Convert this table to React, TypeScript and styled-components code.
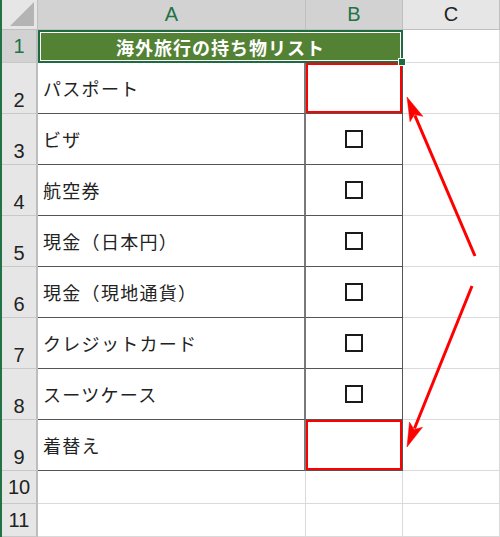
import React from "react";
import styled, { createGlobalStyle, css } from "styled-components";

const Global = createGlobalStyle`
  html, body { margin: 0; padding: 0; background: #ffffff; }
  body { width: 500px; height: 537px; overflow: hidden; }
`;

const Sheet = styled.div`
  position: relative;
  display: grid;
  grid-template-columns: 36px 268px 97px 97px;
  grid-template-rows: 30px 33px repeat(8, 51px) 33px 33px;
  border-left: 2px solid #217346;
  width: 498px;
  height: 537px;
  background: #ffffff;
  font-family: "Noto Sans CJK JP", "Noto Sans", sans-serif;
`;

const Corner = styled.div`
  position: relative;
  background: #e6e6e6;
  border-right: 1px solid #bfbfbf;
  border-bottom: 1px solid #bfbfbf;
  &::after {
    content: "";
    position: absolute;
    right: 3px;
    bottom: 3px;
    width: 24px;
    height: 24px;
    background: #b4b4b4;
    clip-path: polygon(100% 0, 100% 100%, 0 100%);
  }
`;

const ColHeader = styled.div<{ $active?: boolean }>`
  display: flex;
  align-items: center;
  justify-content: center;
  font-family: "Liberation Sans", Arial, sans-serif;
  font-size: 20px;
  background: ${(p) => (p.$active ? "#d2d2d2" : "#e6e6e6")};
  color: ${(p) => (p.$active ? "#217346" : "#222222")};
  border-right: 1px solid #bfbfbf;
  border-bottom: 1px solid #bfbfbf;
  box-sizing: border-box;
`;

const RowHeader = styled.div<{ $active?: boolean; $center?: boolean }>`
  display: flex;
  justify-content: center;
  align-items: ${(p) => (p.$center ? "center" : "flex-end")};
  padding-bottom: ${(p) => (p.$center ? "0" : "3px")};
  font-family: "Liberation Sans", Arial, sans-serif;
  font-size: 20px;
  line-height: 1;
  background: ${(p) => (p.$active ? "#d2d2d2" : "#e6e6e6")};
  color: ${(p) => (p.$active ? "#217346" : "#222222")};
  border-right: 2px solid #bdbdbd;
  border-bottom: 1px solid #c8c8c8;
  box-sizing: border-box;
`;

const TitleCell = styled.div`
  position: relative;
  grid-column: span 2;
  display: flex;
  align-items: center;
  justify-content: center;
  background: #548235;
  color: #ffffff;
  font-weight: 700;
  font-size: 18px;
  letter-spacing: 1px;
  border: 2px solid #1e6b41;
  box-shadow: inset 0 0 0 1px #ffffff;
  box-sizing: border-box;
`;

const Handle = styled.span`
  position: absolute;
  right: -5px;
  bottom: -5px;
  width: 6px;
  height: 6px;
  background: #1e6b41;
  border: 1px solid #ffffff;
  z-index: 2;
`;

const Cell = styled.div<{ $kind?: "a" | "b" | "plain"; $mark?: boolean }>`
  display: flex;
  align-items: center;
  box-sizing: border-box;
  font-size: 18px;
  letter-spacing: 1.3px;
  color: #222222;
  ${(p) =>
    p.$kind === "a"
      ? css`
          padding-left: 5px;
          border-right: 2px solid #7a7a7a;
          border-bottom: 1px solid #555555;
        `
      : p.$kind === "b"
      ? css`
          justify-content: center;
          border-right: 1px solid #555555;
          border-bottom: 1px solid #555555;
        `
      : css`
          border-right: 1px solid #dadada;
          border-bottom: 1px solid #dadada;
        `}
  ${(p) =>
    p.$mark &&
    css`
      box-shadow: inset 0 0 0 2px #ff0000;
    `}
`;

const Box = styled.span`
  display: inline-block;
  width: 14px;
  height: 14px;
  border: 2px solid #1a1a1a;
`;

const Overlay = styled.svg`
  position: absolute;
  left: -2px;
  top: 0;
  width: 500px;
  height: 537px;
  pointer-events: none;
`;

type Pt = [number, number];

function Arrow({ from, to }: { from: Pt; to: Pt }) {
  const dx = to[0] - from[0];
  const dy = to[1] - from[1];
  const len = Math.hypot(dx, dy);
  const ux = dx / len;
  const uy = dy / len;
  const head = 24;
  const half = 7;
  const bx = to[0] - ux * head;
  const by = to[1] - uy * head;
  const px = -uy * half;
  const py = ux * half;
  const lx = to[0] - ux * (head - 4);
  const ly = to[1] - uy * (head - 4);
  return (
    <g fill="#ff0000" stroke="#ff0000">
      <line x1={from[0]} y1={from[1]} x2={lx} y2={ly} strokeWidth={3} />
      <polygon
        points={`${to[0]},${to[1]} ${bx + px},${by + py} ${bx + ux * 5},${by + uy * 5} ${bx - px},${by - py}`}
        strokeWidth={0.5}
      />
    </g>
  );
}

const items: { label: string; check: boolean; mark?: boolean }[] = [
  { label: "パスポート", check: false, mark: true },
  { label: "ビザ", check: true },
  { label: "航空券", check: true },
  { label: "現金（日本円）", check: true },
  { label: "現金（現地通貨）", check: true },
  { label: "クレジットカード", check: true },
  { label: "スーツケース", check: true },
  { label: "着替え", check: false, mark: true },
];

export default function App() {
  return (
    <>
      <Global />
      <Sheet>
        <Corner />
        <ColHeader $active>A</ColHeader>
        <ColHeader $active>B</ColHeader>
        <ColHeader>C</ColHeader>

        <RowHeader $active $center>1</RowHeader>
        <TitleCell>
          海外旅行の持ち物リスト
          <Handle />
        </TitleCell>
        <Cell $kind="plain" />

        {items.map((it, i) => (
          <React.Fragment key={it.label}>
            <RowHeader>{i + 2}</RowHeader>
            <Cell $kind="a">{it.label}</Cell>
            <Cell $kind="b" $mark={it.mark}>
              {it.check && <Box />}
            </Cell>
            <Cell $kind="plain" />
          </React.Fragment>
        ))}

        {[10, 11].map((n) => (
          <React.Fragment key={n}>
            <RowHeader $center>{n}</RowHeader>
            <Cell $kind="plain" />
            <Cell $kind="plain" />
            <Cell $kind="plain" />
          </React.Fragment>
        ))}

        <Overlay viewBox="0 0 500 537">
          <Arrow from={[475, 256]} to={[407, 97]} />
          <Arrow from={[472, 286]} to={[407, 447]} />
        </Overlay>
      </Sheet>
    </>
  );
}
